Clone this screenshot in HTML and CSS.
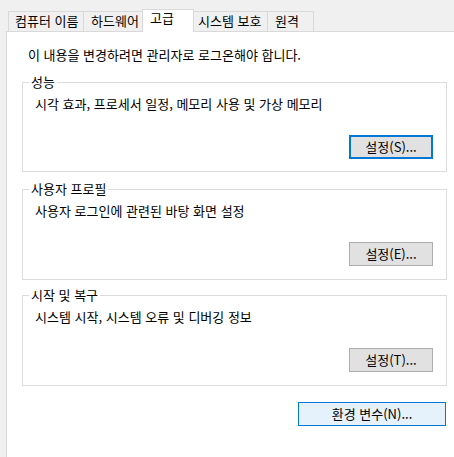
FILE: index.html
```html
<!DOCTYPE html>
<html lang="ko">
<head>
<meta charset="utf-8">
<title>시스템 속성 - 고급</title>
<link rel="stylesheet" href="styles.css">
</head>
<body>
<div class="window">
  <div class="tabs">
    <div class="tab tab-name">컴퓨터 이름</div>
    <div class="tab tab-hw">하드웨어</div>
    <div class="tab tab-adv is-active">고급</div>
    <div class="tab tab-prot">시스템 보호</div>
    <div class="tab tab-remote">원격</div>
  </div>
  <div class="panel">
    <p class="intro">이 내용을 변경하려면 관리자로 로그온해야 합니다.</p>

    <div class="group group-perf">
      <span class="group-title">성능</span>
      <p class="group-text">시각 효과, 프로세서 일정, 메모리 사용 및 가상 메모리</p>
      <div class="group-actions"><button class="btn btn-focus">설정(S)...</button></div>
    </div>

    <div class="group group-profile">
      <span class="group-title">사용자 프로필</span>
      <p class="group-text">사용자 로그인에 관련된 바탕 화면 설정</p>
      <div class="group-actions"><button class="btn">설정(E)...</button></div>
    </div>

    <div class="group group-startup">
      <span class="group-title">시작 및 복구</span>
      <p class="group-text">시스템 시작, 시스템 오류 및 디버깅 정보</p>
      <div class="group-actions"><button class="btn">설정(T)...</button></div>
    </div>

    <div class="footer"><button class="btn btn-env">환경 변수(N)...</button></div>
  </div>
</div>
</body>
</html>
```

FILE: styles.css
```css
* { box-sizing: border-box; }

html, body {
  margin: 0;
  padding: 0;
  background: #f0f0f0;
}

body {
  font-family: "Noto Sans CJK KR", "Noto Sans", sans-serif;
  font-size: 13px;
  color: #000;
}

.window {
  width: 454px;
  height: 457px;
  overflow: hidden;
  display: flex;
  flex-direction: column;
  background: #f0f0f0;
}

.tabs {
  display: flex;
  align-items: flex-end;
  padding: 9px 0 0 8px;
  height: 31px;
}

.tab {
  height: 20px;
  border: 1px solid #d9d9d9;
  border-bottom: none;
  background: #f0f0f0;
  line-height: 18px;
  padding-left: 6px;
  white-space: nowrap;
  margin-left: -1px;
}

.tab:first-child { margin-left: 0; }

.tab-name { width: 76px; }
.tab-hw { width: 60px; padding-left: 7px; }
.tab-adv { width: 52px; padding-left: 7px; }
.tab-prot { width: 75px; padding-left: 4px; }
.tab-remote { width: 47px; padding-left: 7px; }

.tab.is-active {
  height: 23px;
  margin-bottom: -1px;
  background: #fff;
  position: relative;
  z-index: 1;
  line-height: 16px;
}

.panel {
  flex: 1;
  margin-left: 6px;
  border-top: 1px solid #d9d9d9;
  border-left: 1px solid #d9d9d9;
  background: #fff;
  padding: 15px 7px 0 15px;
}

.intro {
  margin: 0 0 19px 6px;
  line-height: 16px;
}

.group {
  position: relative;
  height: 90px;
  border: 1px solid #dcdcdc;
  padding: 13px 13px 0 12px;
}

.group-profile { margin-top: 17px; height: 91px; }
.group-startup { margin-top: 15px; height: 91px; }

.group-title {
  position: absolute;
  top: -9px;
  left: 6px;
  padding: 0 2px;
  background: #fff;
  line-height: 16px;
}

.group-text {
  margin: 0;
  line-height: 16px;
}

.group-actions {
  display: flex;
  justify-content: flex-end;
  margin-top: 23px;
}

.btn {
  font: inherit;
  color: #000;
  width: 84px;
  height: 24px;
  border: 1px solid #adadad;
  background: #e1e1e1;
  padding: 0;
  line-height: 20px;
  text-align: center;
}

.btn-focus {
  border: 2px solid #0078d7;
}

.footer {
  display: flex;
  justify-content: flex-end;
  margin-top: 16px;
  padding-right: 1px;
}

.btn-env {
  width: 148px;
  background: #e5f1fb;
  border-color: #0078d7;
}
```
